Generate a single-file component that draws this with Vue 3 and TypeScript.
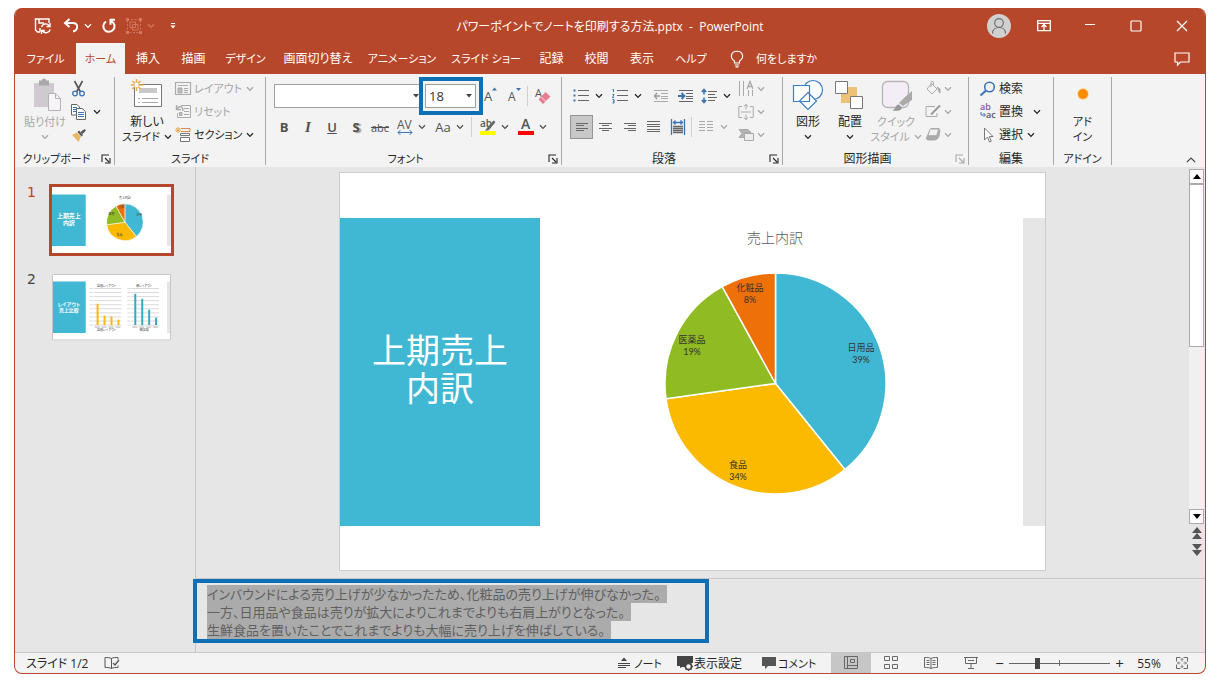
<script setup lang="ts">
import { computed, h, ref } from 'vue'

const Chevron = () =>
  h('svg', { class: 'chevron', viewBox: '0 0 8 6', 'aria-hidden': 'true' }, [
    h('path', { d: 'M1 1.2 4 4.4 7 1.2', fill: 'none', stroke: 'currentColor', 'stroke-width': 1.3 }),
  ])

const Launcher = () =>
  h('svg', { viewBox: '0 0 10 10', 'aria-hidden': 'true' }, [
    h('path', { d: 'M1 8V1h7M4 4l4 4M9 4v5H4', fill: 'none', stroke: 'currentColor', 'stroke-width': 1.1 }),
  ])

const tabs = [
  'ファイル', 'ホーム', '挿入', '描画', 'デザイン', '画面切り替え',
  'アニメーション', 'スライド ショー', '記録', '校閲', '表示', 'ヘルプ',
]
const isKana = (text: string) => /^[ァ-ヶー ]+$/.test(text)
const activeTab = ref('ホーム')

const fontName = ref('')
const fontSize = ref('18')
const zoom = ref(55)

interface Share {
  name: string
  label: string
  from: number
  to: number
  color: string
  x: number
  y: number
}

const shares: Share[] = [
  { name: '日用品', label: '39%', from: 0, to: 0.392, color: '#41b8d3', x: 321, y: 133 },
  { name: '食品', label: '34%', from: 0.392, to: 0.728, color: '#fbb900', x: 198, y: 250 },
  { name: '医薬品', label: '19%', from: 0.728, to: 0.92, color: '#90bb23', x: 152, y: 125 },
  { name: '化粧品', label: '8%', from: 0.92, to: 1, color: '#ee7008', x: 210, y: 73 },
]

function slicePath(s: Share, cx: number, cy: number, r: number): string {
  const point = (t: number) => {
    const a = t * 2 * Math.PI
    return `${(cx + r * Math.sin(a)).toFixed(2)} ${(cy - r * Math.cos(a)).toFixed(2)}`
  }
  const large = s.to - s.from > 0.5 ? 1 : 0
  return `M${cx} ${cy}L${point(s.from)}A${r} ${r} 0 ${large} 1 ${point(s.to)}Z`
}

const mainSlices = computed(() => shares.map((s) => ({ ...s, d: slicePath(s, 235.5, 165.5, 110.5) })))
const thumbSlices = computed(() => shares.map((s) => ({ ...s, d: slicePath(s, 73.5, 35.5, 18.5) })))

const barCharts = [
  { x: 42, color: '#fbb900', title: '店頭レイアウト', axis: '店頭レイアウト', tops: [30, 42, 43, 46] },
  { x: 80, color: '#35aabf', title: '新レイアウト', axis: '新店頭', tops: [20, 25, 36, 44] },
]

const notes = [
  'インバウンドによる売り上げが少なかったため、化粧品の売り上げが伸びなかった。',
  '一方、日用品や食品は売りが拡大によりこれまでよりも右肩上がりとなった。',
  '生鮮食品を置いたことでこれまでよりも大幅に売り上げを伸ばしている。',
]
</script>

<template>
  <div class="screen" lang="ja">
    <div class="window">
      <header class="titlebar">
        <div class="quick">
          <button aria-label="保存">
            <svg width="18" height="18" viewBox="0 0 18 18" fill="none" stroke="#fff" stroke-width="1.4">
              <path d="M6 15H3.500L1.500 13V2h13.500v4M5 2v4h5M6 15v-4" />
              <path d="M7.500 10a4.300 4.300 0 0 1 7.500-1.500M16 6v3.500h-3.500M16.200 12.500a4.300 4.300 0 0 1-7.600 1.500M7.500 17v-3.500h3.300" />
            </svg>
          </button>
          <button aria-label="元に戻す" class="undo">
            <svg width="16" height="16" viewBox="0 0 16 16" fill="none" stroke="#fff" stroke-width="2">
              <path d="M6.500 1 2 5l4.500 4M2.500 5H10c5.500 0 5.500 7 0 8.500" />
            </svg>
            <Chevron />
          </button>
          <button aria-label="繰り返し" class="redo">
            <svg width="16" height="16" viewBox="0 0 16 16" fill="none" stroke="#fff" stroke-width="2">
              <path d="M5 3.500a5.600 5.600 0 1 0 5.500-.2M14 1.800H9.500v5" />
            </svg>
          </button>
          <button aria-label="グループ化" class="dim">
            <svg width="16" height="16" viewBox="0 0 16 16" fill="none" stroke="currentColor">
              <path d="M1.500 1.500h13v13h-13z" stroke-dasharray="2 1.500" />
              <path d="M4 4h5.500v5.500H4zM6.500 6.500H12V12H6.500z" />
              <path d="M0 0h3v3H0zM13 0h3v3h-3zM0 13h3v3H0zM13 13h3v3h-3z" fill="currentColor" stroke="none" />
            </svg>
            <Chevron />
          </button>
          <button aria-label="クイック アクセス ツール バーのユーザー設定" class="customize">
            <svg width="8" height="8" viewBox="0 0 8 8" fill="#fff"><path d="M2 1h4v1H2zM1.500 3.500h5L4 6.500z" /></svg>
          </button>
        </div>
        <h1>パワーポイントでノートを印刷する方法.pptx&nbsp; -&nbsp; PowerPoint</h1>
        <div class="controls">
          <button aria-label="アカウント" class="avatar">
            <svg width="24" height="24" viewBox="0 0 24 24" fill="none" stroke="#6a6f75" stroke-width="1.2">
              <circle cx="12" cy="12" r="12" fill="#d2d0ce" stroke="none" />
              <circle cx="12" cy="9" r="4.300" /><path d="M5.500 19.500c0-8 13-8 13 0" />
            </svg>
          </button>
          <button aria-label="リボンの表示オプション">
            <svg width="14" height="14" viewBox="0 0 14 14" fill="none" stroke="#fff" stroke-width="1.300">
              <path d="M.7 1.700h12.600v10H.7zM.7 4.300h12.600M7 11V5.500M4.500 8 7 5.500 9.500 8" />
            </svg>
          </button>
          <button aria-label="最小化">
            <svg width="12" height="12" viewBox="0 0 12 12" stroke="#fff" stroke-width="1.200"><path d="M1 4.500h10" /></svg>
          </button>
          <button aria-label="最大化">
            <svg width="12" height="12" viewBox="0 0 12 12" fill="none" stroke="#fff" stroke-width="1.200"><rect x="1" y="1" width="10" height="10" rx="1" /></svg>
          </button>
          <button aria-label="閉じる">
            <svg width="12" height="12" viewBox="0 0 12 12" stroke="#fff" stroke-width="1.200"><path d="M1 1l10 10M11 1 1 11" /></svg>
          </button>
        </div>
      </header>

      <nav class="tabbar">
        <div class="tabs">
          <button
            v-for="tab in tabs"
            :key="tab"
            :class="{ active: tab === activeTab, kana: isKana(tab) }"
            @click="activeTab = tab"
          >{{ tab }}</button>
        </div>
        <button class="tell-me kana">
          <svg width="14" height="18" viewBox="0 0 14 18" fill="none" stroke="#fff" stroke-width="1.200">
            <path d="M4.500 13v-2C1.500 9 1 7 1.500 5c1.500-5 9.500-5 11 0 .5 2 0 4-3 6v2zM4.800 15h4.400M5.500 16.800h3" />
          </svg>
          何をしますか
        </button>
        <button class="comment-button" aria-label="コメント">
          <svg width="16" height="14" viewBox="0 0 16 14" fill="none" stroke="#fff" stroke-width="1.200">
            <path d="M1 1h14v9H6.500L3.500 13v-3H1z" />
          </svg>
        </button>
      </nav>

      <section class="ribbon">
        <div class="group">
          <div class="body clipboard">
            <button class="big off">
              <svg width="32" height="32" viewBox="0 0 32 32">
                <path d="M5 4h20v24H5z" fill="#cfcacf" /><path d="M10 1.500h2.500a2.600 2.600 0 0 1 5 0H20v5H10z" fill="#aba8ab" />
                <path d="M19.500 14.500h7l5 5v12h-12z" fill="#f7f5f7" stroke="#b5b2b5" /><path d="M26.500 14.500v5h5" fill="none" stroke="#b5b2b5" />
              </svg>
              <span class="kana">貼り付け</span>
              <Chevron class="below" />
            </button>
            <div class="stack">
              <button aria-label="切り取り">
                <svg width="16" height="16" viewBox="0 0 16 16" fill="none">
                  <path d="M3.500 0 9.500 11M11.500 0l-6 11" stroke="#555" stroke-width="1.600" />
                  <circle cx="4" cy="12.500" r="2.300" stroke="#3b73b4" stroke-width="1.300" /><circle cx="11" cy="12.500" r="2.300" stroke="#3b73b4" stroke-width="1.300" />
                </svg>
              </button>
              <button aria-label="コピー" class="wide">
                <svg width="16" height="16" viewBox="0 0 16 16" stroke="#666" fill="#fff">
                  <path d="M.5.5H6l2.500 2.500v8h-8z" /><path d="M2 3.500h4M2 5.500h3M2 7.500h3" stroke="#3b73b4" />
                  <path d="M5.500 4.500H11l3.500 3v8h-9z" /><path d="M7 8.500h6M7 10.500h6M7 12.500h6" stroke="#3b73b4" />
                </svg>
                <Chevron />
              </button>
              <button aria-label="書式のコピー/貼り付け">
                <svg width="16" height="16" viewBox="0 0 16 16">
                  <path d="M1 8 6 5.500l4 4L7.500 15z" fill="#e9b866" /><path d="M6.500 5 8 3.500 12 8l-1.500 1.500z" fill="#555" /><path d="M9.500 5l4-3 1.500 1.500-3.500 3.500z" fill="#555" />
                </svg>
              </button>
            </div>
          </div>
          <div class="label"><span class="kana">クリップボード</span><Launcher class="launcher" /></div>
        </div>

        <div class="group">
          <div class="body slides">
            <button class="big new-slide">
              <svg width="32" height="32" viewBox="0 0 32 32" fill="none">
                <path d="M3.500 5.500h27v22h-27z" fill="#fff" stroke="#777" />
                <path d="M8 9h18v5H8z" fill="#c8c8c8" /><path d="M7 19.500h2m2 0h16M7 23.500h2m2 0h16" stroke="#aaa" />
                <path d="M5.500 0v12M0 6h12M1.500 2l8 8M9.500 2l-8 8" stroke="#e9ab4e" stroke-width="1.500" /><circle cx="5.500" cy="6" r="2.200" fill="#fff" />
              </svg>
              <span>新しい</span>
              <span class="with-chevron kana">スライド <Chevron /></span>
            </button>
            <div class="stack">
              <button class="off">
                <svg width="16" height="16" viewBox="0 0 16 16" fill="none" stroke="#aaa"><path d="M.5 1.500h15v12H.5zM3 4.500h10" stroke-width="1.200" /><path d="M3 7h4v5H3z" fill="#bbb" /><path d="M9 7.500h4M9 9.500h4M9 11.500h4" /></svg>
                <span class="kana">レイアウト</span><Chevron />
              </button>
              <button class="off">
                <svg width="16" height="16" viewBox="0 0 16 16" fill="none" stroke="#aaa"><path d="M6 1.500h9.500v12h-13V9M9 4.500h5M9 7.500h5M9 10.500h5" /><path d="M1.500 1v4.500H6M2 5c2-4 6-3 6 2" stroke-width="1.400" /><path d="M4.500 8.500h2.500v3H4.500z" fill="#bbb" /></svg>
                <span class="kana">リセット</span>
              </button>
              <button>
                <svg width="16" height="16" viewBox="0 0 16 16" fill="none"><path d="M6 1.500h9v3H6" stroke="#d98b52" /><path d="M5.500 6.500h9v2h-9zM5.500 10.500h9v4h-9z" stroke="#777" fill="#fff" /><path d="M3 0v6M0 3h6M1 1l4 4M5 1 1 5" stroke="#e9ab4e" /></svg>
                <span class="kana">セクション</span><Chevron />
              </button>
            </div>
          </div>
          <div class="label"><span class="kana">スライド</span></div>
        </div>

        <div class="group">
          <div class="body rows">
            <div class="row fields">
              <label class="combo font-name">
                <select v-model="fontName" aria-label="フォント"><option value=""></option></select>
                <svg width="6" height="4" viewBox="0 0 6 4" fill="#444"><path d="M0 0h6L3 3.500z" /></svg>
              </label>
              <label class="combo font-size">
                <select v-model="fontSize" aria-label="フォント サイズ"><option>18</option></select>
                <svg width="6" height="4" viewBox="0 0 6 4" fill="#444"><path d="M0 0h6L3 3.500z" /></svg>
                <span class="callout"></span>
              </label>
              <button class="cell" aria-label="フォント サイズの拡大">
                <svg width="16" height="18" viewBox="0 0 16 18"><text x="2" y="14" font-size="13" fill="#555">A</text><path d="M10 3.500 12.500.5l2.500 3z" fill="#3b73b4" /></svg>
              </button>
              <button class="cell" aria-label="フォント サイズの縮小">
                <svg width="16" height="18" viewBox="0 0 16 18"><text x="2" y="14" font-size="12" fill="#555">A</text><path d="M10 1h5l-2.500 3z" fill="#3b73b4" /></svg>
              </button>
              <i class="rule"></i>
              <button class="cell" aria-label="すべての書式をクリア">
                <svg width="18" height="18" viewBox="0 0 18 18"><text x="2" y="10" font-size="11" fill="#555">A</text><path d="M5.500 12.500 12.500 5l5 4.500-7.500 7.500z" fill="#e57f91" /><path d="M8 10l5 4.500" stroke="#f3f3f3" stroke-width=".8" /></svg>
              </button>
            </div>
            <div class="row styles">
              <button class="cell"><b>B</b></button>
              <button class="cell"><i class="italic">I</i></button>
              <button class="cell"><u>U</u></button>
              <button class="cell"><b class="shadow">S</b></button>
              <button class="cell strike"><s>abc</s></button>
              <button class="split" aria-label="文字の間隔">
                <svg width="18" height="18" viewBox="0 0 18 18" fill="none"><text x="1" y="11" font-size="12" fill="#555">AV</text><path d="M2 14.500h14M4.500 12 2 14.500 4.500 17M13.500 12l2.500 2.500-2.500 2.500" stroke="#3b73b4" /></svg>
                <Chevron />
              </button>
              <button class="split"><span class="case">Aa</span><Chevron /></button>
              <i class="rule"></i>
              <button class="split" aria-label="蛍光ペンの色">
                <svg width="18" height="18" viewBox="0 0 18 18"><text x="1" y="9" font-size="10" font-weight="600" fill="#555">ab</text><path d="M14.500 2.500 8 10l-2 3 4-1 6.500-8z" fill="#666" /><path d="M1 13h16v4H1z" fill="#ffff00" /></svg>
                <Chevron />
              </button>
              <button class="split" aria-label="フォントの色">
                <svg width="18" height="18" viewBox="0 0 18 18"><text x="4" y="11" font-size="14" font-weight="600" fill="#555">A</text><path d="M1 13h16v4H1z" fill="#f00" /></svg>
                <Chevron />
              </button>
            </div>
          </div>
          <div class="label"><span class="kana">フォント</span><Launcher class="launcher" /></div>
        </div>

        <div class="group">
          <div class="body paragraph">
            <div class="rows">
              <div class="row">
                <button class="split list" aria-label="箇条書き">
                  <svg width="16" height="16" viewBox="0 0 16 16"><path d="M5 2.500h11M5 7.500h11M5 12.500h11" stroke="#666" /><path d="M.5 1.500h2v2h-2zM.5 6.500h2v2h-2zM.5 11.500h2v2h-2z" fill="#3b73b4" /></svg>
                  <Chevron />
                </button>
                <button class="split list" aria-label="段落番号">
                  <svg width="16" height="16" viewBox="0 0 16 16" fill="none"><path d="M5 2.500h11M5 7.500h11M5 12.500h11" stroke="#666" /><path d="M.5 1.500h1V4M.5 6.500h1.500L.5 9.500H2M.5 11.500h1.500v3.500H.5M1 13.500h1" stroke="#3b73b4" /></svg>
                  <Chevron />
                </button>
                <button class="indent" aria-label="インデントを減らす">
                  <svg width="16" height="16" viewBox="0 0 16 16" fill="none"><path d="M1 2.500h14M8 5.500h7M8 8.500h7M8 10.500h7M1 13.500h14" stroke="#aaa" /><path d="M7 8H1.500M4 5 1.500 8 4 11" stroke="#999" stroke-width="1.300" /></svg>
                </button>
                <button class="indent" aria-label="インデントを増やす">
                  <svg width="16" height="16" viewBox="0 0 16 16" fill="none"><path d="M1 2.500h14M8 5.500h7M8 8.500h7M8 10.500h7M1 13.500h14" stroke="#666" /><path d="M0 8h6M3.500 5 6.500 8l-3 3" stroke="#3b73b4" stroke-width="1.800" /></svg>
                </button>
                <button class="split list" aria-label="行間">
                  <svg width="16" height="16" viewBox="0 0 16 16" fill="none"><path d="M7 3.500h9M7 6.500h7M7 9.500h9M7 12.500h7" stroke="#666" /><path d="M3 2v4.500M3 9.500V14M.8 4 3 1.500 5.200 4M.8 12 3 14.500 5.200 12" stroke="#3b73b4" stroke-width="1.600" /></svg>
                  <Chevron />
                </button>
              </div>
              <div class="row aligns">
                <button class="align pressed" aria-label="左揃え"><svg width="16" height="16" viewBox="0 0 16 16" stroke="#666"><path d="M2 4.500h12M2 6.500h8M2 9.500h12M2 11.500h8" /></svg></button>
                <button class="align" aria-label="中央揃え"><svg width="16" height="16" viewBox="0 0 16 16" stroke="#666"><path d="M1 4.500h13M4 6.500h7M1 9.500h13M4 11.500h7" /></svg></button>
                <button class="align" aria-label="右揃え"><svg width="16" height="16" viewBox="0 0 16 16" stroke="#666"><path d="M2 4.500h12M6 6.500h8M2 9.500h12M6 11.500h8" /></svg></button>
                <button class="align" aria-label="両端揃え"><svg width="16" height="16" viewBox="0 0 16 16" stroke="#666"><path d="M1 2.500h13M1 5.500h13M1 7.500h13M1 10.500h13M1 12.500h13" /></svg></button>
                <button class="align" aria-label="均等割り付け"><svg width="16" height="16" viewBox="0 0 16 16" fill="none"><path d="M1.500 0v16M14.500 0v16M4 3.500h8M5.500 1.500l-2 2 2 2M10.500 1.500l2 2-2 2" stroke="#3b73b4" stroke-width="1.300" /><path d="M3 7.500h10M3 9.500h10M3 11.500h10M3 13.500h10" stroke="#666" stroke-width="1.300" /></svg></button>
                <i class="rule"></i>
                <button class="split list off" aria-label="段組み"><svg width="16" height="16" viewBox="0 0 16 16" stroke="#aaa"><path d="M1 2.500h6M1 5.500h6M1 8.500h6M1 11.500h6M9 2.500h6M9 5.500h6M9 8.500h6M9 11.500h6" /></svg><Chevron /></button>
              </div>
            </div>
            <div class="stack off">
              <button aria-label="文字列の方向"><svg width="16" height="16" viewBox="0 0 16 16" fill="none" stroke="#aaa"><path d="M1.500 0v15M5.500 0v15M10.500 9v6M14.500 9v6" /><path d="M9 8 12 .5 15 8M10 5.500h4" stroke-width="1.300" /></svg><Chevron /></button>
              <button aria-label="文字の配置"><svg width="16" height="16" viewBox="0 0 16 16" fill="none" stroke="#aaa"><path d="M4 2.500H.8v11H4M12 2.500h3.200v11H12M3 8h10M8 0v5.500M5.800 2.500 8 .5l2.200 2M8 10.500V16M5.800 13.500l2.200 2 2.200-2" /></svg><Chevron /></button>
              <button aria-label="SmartArt に変換"><svg width="16" height="16" viewBox="0 0 16 16" fill="none" stroke="#aaa"><path d="M1 2.500h9l3 3H6v5H1l3-4z" fill="#b5b5b5" /><path d="M6.500 6.500h9v7h-9z" fill="#eee" /></svg><Chevron /></button>
            </div>
          </div>
          <div class="label"><span>段落</span><Launcher class="launcher" /></div>
        </div>

        <div class="group">
          <div class="body drawing">
            <button class="big">
              <svg width="32" height="32" viewBox="0 0 32 32" fill="#fff" stroke="#3b7cc4" stroke-width="1.200"><circle cx="21" cy="11" r="9.500" /><path d="M1.500 6.500h16v16h-16zM16 13.500l8.500 8.500-8.500 8.500L7.500 22z" /></svg>
              <span>図形</span><Chevron class="below" />
            </button>
            <button class="big">
              <svg width="32" height="32" viewBox="0 0 32 32"><path d="M14 8h9v9h-9zM7 15h9v9H7z" fill="#ecc278" /><g fill="#fff" stroke="#777"><path d="M1.500 2.500h12v12h-12zM16.500 17.500h12v12h-12z" /></g></svg>
              <span>配置</span><Chevron class="below" />
            </button>
            <button class="big off quick-style">
              <svg width="32" height="32" viewBox="0 0 32 32"><rect x="2.500" y="2.500" width="26" height="26" rx="5" fill="#f3edf5" stroke="#b8b5b8" stroke-width="1.300" /><path d="M32 12v9L23 27l-4-3 6-6z" fill="#aaa" /><path d="M12 31.500c4-1 3-6 7-6l3 3c-1 4-6 3.500-10 3z" fill="#999" /></svg>
              <span class="kana">クイック</span><span class="with-chevron kana">スタイル <Chevron /></span>
            </button>
            <div class="stack off">
              <button aria-label="図形の塗りつぶし"><svg width="16" height="16" viewBox="0 0 16 16" fill="none" stroke="#aaa"><path d="M6.500 2.500 12 8l-5 5-5-5zM6 6V1.500c0-1.500 2.500-1.500 2.500 0V5" /><path d="M12 6l3 2v4c-2-1-1-4-3-6z" fill="#aaa" /></svg><Chevron /></button>
              <button aria-label="図形の枠線"><svg width="16" height="16" viewBox="0 0 16 16" fill="none" stroke="#aaa"><path d="M10 2.500H1v10h11V9" /><path d="M15 1.500 8 8.500l-2 2" stroke="#999" stroke-width="1.800" /></svg><Chevron /></button>
              <button aria-label="図形の効果"><svg width="16" height="16" viewBox="0 0 16 16" stroke="#aaa"><path d="M6 1.500h7c1.500 0 2 1 1.800 2.500L14 9c-.3 2-2.500 4-4.500 4H3.500C2 13 1 12 1.500 10.500z" fill="#aaa" /><path d="M5.800 2h6.500c1 0 1.300.5 1 1.500l-1 3.500c-.4 1.200-1 1.700-2.200 1.700H4.500c-1 0-1.300-.7-1-1.700l1-3.500C4.800 2.500 5 2 5.800 2z" fill="#f0f0f0" /></svg><Chevron /></button>
            </div>
          </div>
          <div class="label"><span>図形描画</span><Launcher class="launcher off" /></div>
        </div>

        <div class="group">
          <div class="body editing">
            <div class="stack">
              <button><svg width="16" height="16" viewBox="0 0 16 16" fill="none" stroke="#3b73b4"><circle cx="9.500" cy="6" r="4.800" stroke-width="1.600" /><path d="M6 9.500.5 14.500" stroke-width="2" /></svg><span>検索</span></button>
              <button class="replace"><svg width="16" height="16" viewBox="0 0 16 16"><text x="0" y="6" font-size="9" font-weight="600" fill="#8a55a8">ab</text><text x="6" y="14" font-size="9" font-weight="600" fill="#555">ac</text><path d="M1 8v3h4M3.500 9l2 2-2 2" fill="none" stroke="#3b73b4" /></svg><span>置換</span><Chevron /></button>
              <button><svg width="16" height="16" viewBox="0 0 16 16" fill="#fff" stroke="#777"><path d="M4.500 1v12l3-3 2 5 1.800-.8-2-4.700h3.700z" /></svg><span>選択</span><Chevron /></button>
            </div>
          </div>
          <div class="label"><span>編集</span></div>
        </div>

        <div class="group">
          <div class="body addin">
            <button class="big">
              <svg width="32" height="32" viewBox="0 0 32 32"><circle cx="16" cy="15" r="6" fill="#ffd9a0" /><circle cx="16" cy="15" r="5" fill="#ff8c00" /></svg>
              <span class="kana">アド</span><span class="kana">イン</span>
            </button>
          </div>
          <div class="label"><span class="kana">アドイン</span></div>
        </div>

        <button class="collapse" aria-label="リボンを折りたたむ">
          <svg width="10" height="6" viewBox="0 0 10 6" fill="none" stroke="#444" stroke-width="1.200"><path d="M.8 5.200 5 1l4.200 4.200" /></svg>
        </button>
      </section>

      <main class="workspace">
        <aside class="thumbs">
          <div class="thumb current">
            <span>1</span>
            <svg viewBox="0 0 120 67">
              <path d="M0 0h120v67H0z" fill="#fff" /><path d="M0 7.500h34v52H0z" fill="#41b8d3" /><path d="M116 7.500h4v52h-4z" fill="#e6e6e6" />
              <text x="17" y="31" class="mini-title">上期売上</text><text x="17" y="38" class="mini-title">内訳</text>
              <text x="73.500" y="12" class="mini-label">売上内訳</text>
              <path v-for="s in thumbSlices" :key="s.name" :d="s.d" :fill="s.color" stroke="#fff" stroke-width=".6" />
              <text x="88" y="29" class="mini-label">日用</text><text x="68" y="49" class="mini-label">食品</text><text x="60" y="28" class="mini-label">医薬</text><text x="70" y="21" class="mini-label">化粧</text>
            </svg>
          </div>
          <div class="thumb">
            <span>2</span>
            <svg viewBox="0 0 120 67">
              <path d="M0 0h120v67H0z" fill="#fff" /><path d="M0 7.500h34v52H0z" fill="#41b8d3" /><path d="M116 7.500h4v52h-4z" fill="#e6e6e6" />
              <text x="17" y="32" class="mini-title small">レイアウト</text><text x="17" y="38" class="mini-title small">売上比較</text>
              <g v-for="chart in barCharts" :key="chart.title">
                <text :x="chart.x + 13" y="13" class="mini-label">{{ chart.title }}</text>
                <path v-for="n in 10" :key="n" :d="`M${chart.x} ${10.5 + n * 4.1}h28M${chart.x - 4} ${10.5 + n * 4.1}h3`" stroke="#c8c8c8" stroke-width=".7" />
                <rect v-for="(top, i) in chart.tops" :key="i" :x="chart.x + 3 + i * 7" :y="top" width="2" :height="51.5 - top" :fill="chart.color" />
                <path :d="`M${chart.x + 1} 53.500h26`" stroke="#999" stroke-width=".8" stroke-dasharray="5 2" />
                <text :x="chart.x + 13" y="57" class="mini-label">{{ chart.axis }}</text>
              </g>
              <path d="M.5.5h119v66H.500z" fill="none" stroke="#c6c6c6" />
            </svg>
          </div>
        </aside>

        <div class="editor">
          <div class="stage-row">
            <div class="stage">
              <article class="slide">
                <h2><span>上期売上<br />内訳</span></h2>
                <svg class="chart" viewBox="0 0 483 308">
                  <text x="235" y="25" class="chart-title">売上内訳</text>
                  <path v-for="s in mainSlices" :key="s.name" :d="s.d" :fill="s.color" stroke="#fff" stroke-width="1.500" stroke-linejoin="round" />
                  <g v-for="s in shares" :key="s.label" class="chart-label">
                    <text :x="s.x" :y="s.y">{{ s.name }}</text>
                    <text :x="s.x" :y="s.y + 12">{{ s.label }}</text>
                  </g>
                </svg>
                <div class="edge"></div>
              </article>
            </div>
            <div class="scrollbar">
              <button aria-label="上へ"><svg width="8" height="5" viewBox="0 0 8 5"><path d="M0 5h8L4 0z" /></svg></button>
              <div class="track"><div class="handle"></div></div>
              <button aria-label="下へ"><svg width="8" height="5" viewBox="0 0 8 5"><path d="M0 0h8L4 5z" /></svg></button>
              <button class="jump" aria-label="前のスライド"><svg width="12" height="12" viewBox="0 0 12 12"><path d="M1 6 6 0l5 6zM1 12l5-6 5 6z" fill="#555" /></svg></button>
              <button class="jump" aria-label="次のスライド"><svg width="12" height="12" viewBox="0 0 12 12"><path d="M1 0h10L6 6zM1 6h10l-5 6z" fill="#555" /></svg></button>
            </div>
          </div>
          <div class="notes">
            <div class="note-text" contenteditable="true" spellcheck="false" role="textbox" aria-label="ノート">
              <p v-for="line in notes" :key="line"><mark>{{ line }}</mark></p>
            </div>
            <span class="callout"></span>
          </div>
        </div>
      </main>

      <footer class="status">
        <span class="page">スライド 1/2</span>
        <button aria-label="スペル チェック">
          <svg width="16" height="14" viewBox="0 0 16 14" fill="none" stroke="#555"><path d="M7.500 2.500v10C6 11.500 3 11.500 1 11.500v-10c2 0 5 0 6.500 1 1.500-1 4-1 6.500-1v2M7.500 12.500c1.500-1 4-1 6.500-1v-2" /><path d="M9 7l2 2 4-5" stroke-width="1.300" /></svg>
        </button>
        <div class="panes">
          <button class="notes-button"><svg width="14" height="14" viewBox="0 0 14 14" fill="none" stroke="#444"><path d="M1 7.500h12M1 9.500h12M1 11.500h8" /><path d="M4 5h6L7 1.500z" fill="#444" stroke="none" /></svg><span class="kana">ノート</span></button>
          <button class="display-button"><svg width="16" height="16" viewBox="0 0 16 16"><path d="M0 1h16v7h-4l-4 4H5l-2 1V11H0z" fill="#444" /><circle cx="11.500" cy="11.500" r="3" fill="#f3f3f3" stroke="#444" stroke-width="1.500" /><path d="M11.500 7v2M11.500 14v2M7 11.500h2M14 11.500h2M8.500 8.500l1 1M13.500 13.500l1 1M8.500 14.500l1-1M13.500 9.500l1-1" stroke="#444" stroke-width="1.300" /></svg>表示設定</button>
          <button class="comments-button"><svg width="16" height="14" viewBox="0 0 16 14"><path d="M1 1h14v9H7l-3 3v-3H1z" fill="#555" /></svg><span class="kana">コメント</span></button>
        </div>
        <div class="views">
          <button class="pressed" aria-label="標準"><svg width="14" height="14" viewBox="0 0 14 14" fill="none" stroke="#666"><path d="M.5.5h13v12H.5zM3.500.5v12M3.500 9.500h10M6.500 3.500h4v3h-4z" /></svg></button>
          <button aria-label="スライド一覧"><svg width="14" height="14" viewBox="0 0 14 14" fill="none" stroke="#666"><path d="M.5.5h5v4h-5zM8.500.5h5v4h-5zM.5 8.500h5v4h-5zM8.500 8.500h5v4h-5z" /></svg></button>
          <button aria-label="閲覧表示"><svg width="14" height="14" viewBox="0 0 14 14" fill="none" stroke="#666"><path d="M7 2.500v10C5.500 11.500 3 11.500.5 11.500v-10c2.500 0 5 0 6.500 1 1.500-1 4-1 6.500-1v10c-2.500 0-5 0-6.500 1M2.500 4.500h3M2.500 6.500h3M2.500 8.500h3M8.500 4.500h3M8.500 6.500h3M8.500 8.500h3" /></svg></button>
          <button aria-label="スライド ショー"><svg width="14" height="14" viewBox="0 0 14 14" fill="none" stroke="#666"><path d="M0 1.500h14M1.500 1.500v6h11v-6M7 7.500v5M4 12.500h6M4 4.500h6" /></svg></button>
        </div>
        <div class="zoom">
          <button aria-label="縮小">−</button>
          <input v-model="zoom" type="range" min="0" max="200" aria-label="ズーム" />
          <button aria-label="拡大">+</button>
          <button class="percent">{{ zoom }}%</button>
          <button aria-label="ウィンドウに合わせる"><svg width="12" height="12" viewBox="0 0 12 12" fill="none" stroke="#666"><path d="M.5.5h11v11H.5z" stroke-dasharray="4 3 8 3 8 3 8 3 4" /><path d="M6 1.500v3M4.500 3 6 1.500 7.500 3M6 10.500v-3M4.500 9 6 10.500 7.500 9M1.500 6h3M3 4.500 1.500 6 3 7.500M10.500 6h-3M9 4.500 10.500 6 9 7.500" stroke-width=".8" /></svg></button>
        </div>
      </footer>
    </div>
  </div>
</template>

<style>
body {
  margin: 0;
  background: #fff;
}
</style>

<style scoped>
.screen {
  box-sizing: border-box;
  min-height: 100vh;
  display: flex;
  padding: 8px 14px;
  font-family: "Open Sans", "Noto Sans CJK JP", sans-serif;
  font-size: 12px;
  line-height: 15px;
  font-feature-settings: "palt";
  color: #262626;
  white-space: nowrap;
}
.window {
  flex: 1;
  display: flex;
  flex-direction: column;
  min-width: 0;
  border: 1px solid #b7472a;
  border-top: 0;
  border-radius: 8px;
  overflow: hidden;
  background: #f3f3f3;
}
button {
  display: flex;
  align-items: center;
  justify-content: center;
  padding: 0;
  border: 0;
  background: none;
  font: inherit;
  font-feature-settings: inherit;
  color: inherit;
  white-space: nowrap;
}
svg {
  flex: none;
  display: block;
  overflow: visible;
}
svg.chevron {
  width: 8px;
  height: 6px;
}
.off {
  color: #a6a6a6;
}
.kana {
  font-size: 11px;
}

.titlebar {
  height: 35px;
  display: grid;
  grid-template-columns: 1fr auto 1fr;
  align-items: center;
  background: #b7472a;
  color: #fff;
}
.titlebar h1 {
  margin: 0;
  padding-top: 2px;
  font-size: 12px;
  font-weight: 400;
}
.quick {
  display: flex;
  align-items: center;
  padding-left: 19px;
}
.quick button {
  gap: 5px;
}
.quick .undo,
.quick .dim {
  margin-left: 11px;
}
.quick .redo,
.quick .dim {
  margin-left: 9px;
}
.quick .customize {
  margin-left: 14px;
}
.quick .dim {
  color: #d4765d;
}
.controls {
  display: flex;
  align-items: center;
  justify-content: flex-end;
}
.controls button {
  width: 46px;
  height: 32px;
}
.controls .avatar {
  width: 24px;
  margin-right: 10px;
}

.tabbar {
  display: flex;
  height: 31px;
  background: #b7472a;
  color: #fff;
}
.tabs {
  display: grid;
  grid-template-columns: 61px 49px 46px 45px 59px 86px 82px 86px 45px 45px 46px 52px;
}
.tabs .active {
  background: #f3f3f3;
  color: #b7472a;
}
.tell-me {
  gap: 12px;
  margin-left: 13px;
}
.comment-button {
  margin-left: auto;
  margin-right: 15px;
}

.ribbon {
  display: grid;
  grid-template-columns: 100px 151px 296px 221px 186px 85px 58px 1fr;
  padding: 3px 0 2px;
}
.group {
  display: flex;
  flex-direction: column;
  border-right: 1px solid #a8a8a8;
}
.body {
  display: flex;
  height: 73px;
}
.label {
  display: flex;
  align-items: center;
  height: 15px;
  box-sizing: border-box;
  padding-top: 2px;
}
.label span {
  flex: 1;
  text-align: center;
}
.launcher {
  width: 10px;
  height: 10px;
  margin: 0 3px;
}
.big {
  flex-direction: column;
  justify-content: flex-start;
  width: 42px;
  padding-top: 2px;
}
.big > span:first-of-type {
  margin-top: 3px;
}
.below {
  margin-top: 5px;
}
.with-chevron {
  display: flex;
  align-items: center;
  gap: 4px;
}
.stack button {
  height: 23px;
  gap: 3px;
  justify-content: flex-start;
}
.stack span + .chevron {
  margin-left: 1px;
}
.clipboard {
  padding-left: 9px;
}
.clipboard .stack {
  margin-left: 5px;
}
.clipboard .wide {
  gap: 6px;
}
.slides .new-slide {
  width: 56px;
}
.slides {
  padding-left: 4px;
}

.rows {
  display: flex;
  flex-direction: column;
  gap: 7px;
  padding-top: 7px;
  box-sizing: border-box;
}
.row {
  display: flex;
  align-items: center;
  height: 24px;
}
.fields {
  padding-left: 8px;
}
.combo {
  position: relative;
  display: grid;
  align-items: center;
}
.combo select,
.combo > svg {
  grid-area: 1 / 1;
}
.combo > svg {
  justify-self: end;
  margin-right: 4px;
  pointer-events: none;
}
.combo select {
  width: 100%;
  height: 24px;
  padding: 0 3px;
  appearance: none;
  border: 1px solid #a0a0a0;
  border-radius: 0;
  background: #fff;
  font: inherit;
  font-size: 13px;
  color: #333;
}
.font-name {
  width: 149px;
}
.font-size {
  width: 51px;
  margin-left: 2px;
  margin-right: 2px;
}
.callout {
  position: absolute;
  border: 4px solid #0f6fb4;
  pointer-events: none;
}
.font-size .callout {
  inset: -7px -7px -7px -6px;
}
.cell {
  width: 24px;
  height: 24px;
}
.rule {
  width: 1px;
  height: 20px;
  background: #cfcfcf;
}
.fields .rule {
  margin: 0 2px 0 1px;
}
.styles {
  padding-left: 6px;
  font-size: 13px;
  color: #505050;
}
.italic {
  font-family: "Liberation Serif", serif;
  font-size: 15px;
  font-weight: 700;
}
u {
  font-weight: 600;
}
.shadow {
  text-shadow: 2px 1px 1px #999;
}
.strike {
  font-size: 11px;
}
.split {
  height: 24px;
  gap: 4px;
  padding: 0 4px;
}
.case {
  width: 18px;
}
.styles .rule {
  margin: 0 3px;
}
.styles .rule ~ .split {
  padding: 0 4px;
}
.paragraph {
  display: grid;
  grid-template-columns: 168px 1fr;
  padding-left: 8px;
}
.split.list {
  gap: 6px;
  padding: 0 3px;
  margin-right: 3px;
}
.indent {
  width: 25px;
  height: 24px;
}
.aligns {
  gap: 1px;
}
.align {
  width: 23px;
  height: 24px;
}
.align.pressed {
  background: #c8c8c8;
  box-shadow: inset 0 0 0 1px #949494;
}
.aligns .rule {
  margin: 0 2px 0 1px;
}
.drawing {
  padding-left: 4px;
}
.drawing .quick-style {
  width: 50px;
}
.drawing .stack {
  margin-left: 4px;
}
.editing {
  padding-left: 11px;
}
.replace > span {
  margin-right: 6px;
}
.addin {
  justify-content: center;
}
.collapse {
  align-self: end;
  justify-self: end;
  margin: 0 9px 2px 0;
}

.workspace {
  flex: 1;
  display: grid;
  grid-template-columns: 181px 1fr;
  background: #e6e6e6;
}
.thumbs {
  display: flex;
  flex-direction: column;
  gap: 15px;
  padding-top: 17px;
  border-right: 1px solid #c6c6c6;
}
.thumb {
  display: grid;
  grid-template-columns: 34px 125px;
  font-family: "DejaVu Sans", "Noto Sans CJK JP", sans-serif;
  font-size: 14px;
  color: #444;
}
.thumb span {
  padding-left: 12px;
  line-height: 16px;
}
.thumb svg {
  border: 3px solid transparent;
  overflow: hidden;
}
.thumb.current {
  color: #c43e1c;
}
.thumb.current svg {
  border-color: #b7472a;
}
.mini-title {
  font-size: 6px;
  font-weight: 700;
  fill: #fff;
  text-anchor: middle;
}
.mini-title.small {
  font-size: 5px;
}
.mini-label {
  font-size: 3px;
  fill: #444;
  text-anchor: middle;
}

.editor {
  display: flex;
  flex-direction: column;
  min-width: 0;
}
.stage-row {
  display: flex;
  border-bottom: 1px solid #c6c6c6;
}
.stage {
  flex: 1;
  padding: 6px 0 8px;
}
.slide {
  box-sizing: border-box;
  width: 71%;
  margin: 0 auto;
  padding: 45px 0 44px;
  display: grid;
  grid-template-columns: 200fr 483fr 22fr;
  background: #fff;
  box-shadow: 0 0 0 1px #cdcdcd;
}
.slide h2 {
  display: flex;
  align-items: center;
  justify-content: center;
  margin: 0;
  padding-bottom: 6px;
  background: #41b8d3;
  color: #fff;
  font-size: 34px;
  line-height: 38px;
  font-weight: 400;
  text-align: center;
  font-feature-settings: normal;
}
.chart {
  width: 100%;
}
.chart-title {
  font-size: 14px;
  fill: #595959;
  text-anchor: middle;
  font-weight: 300;
  font-feature-settings: normal;
}
.chart-label {
  font-family: Lato, "Noto Sans CJK JP", sans-serif;
  font-size: 9px;
  fill: #333;
  text-anchor: middle;
}
.edge {
  background: #e6e6e6;
}
.scrollbar {
  display: flex;
  flex-direction: column;
  width: 15px;
  padding: 2px 1px 20px 0;
}
.scrollbar button {
  height: 15px;
  border: 1px solid #ababab;
  background: #fff;
}
.scrollbar .track {
  flex: 1;
  background: #f0f0f0;
}
.scrollbar .handle {
  box-sizing: border-box;
  height: 50%;
  border: 1px solid #ababab;
  background: #fff;
}
.scrollbar .jump {
  height: 17px;
  border: 0;
  background: none;
}

.notes {
  position: relative;
  flex: 1;
  padding: 6px 0 0 11px;
}
.note-text {
  font-size: 13px;
  line-height: 18px;
}
.note-text p {
  margin: 0;
}
.note-text mark {
  display: inline-block;
  padding-right: 6px;
  background: #ababab;
  color: #606060;
}
.notes .callout {
  box-sizing: border-box;
  top: 0;
  left: -3px;
  width: 516px;
  height: 64px;
}

.status {
  display: flex;
  align-items: center;
  height: 20px;
  border-top: 1px solid #c6c6c6;
  padding: 0 17px 0 11px;
}
.page {
  margin-right: 15px;
}
.panes {
  display: flex;
  margin-left: auto;
}
.panes button {
  justify-content: flex-start;
  gap: 1px;
}
.panes .notes-button {
  width: 60px;
  gap: 3px;
}
.display-button {
  width: 84px;
}
.comments-button {
  width: 70px;
}
.views {
  display: flex;
  align-self: stretch;
}
.views button {
  width: 40px;
}
.views .pressed {
  background: #c6c6c6;
}
.zoom {
  display: flex;
  align-items: center;
  gap: 4px;
  margin-left: 3px;
}
.zoom button {
  min-width: 11px;
  font-size: 15px;
}
.zoom .percent {
  width: 40px;
  margin-right: 3px;
  font-size: 12px;
}
.zoom input {
  appearance: none;
  width: 101px;
  height: 12px;
  margin: 0;
  background:
    linear-gradient(#666, #666) center / 1px 6px no-repeat,
    linear-gradient(#666, #666) center / 100% 1px no-repeat;
}
.zoom input::-webkit-slider-thumb {
  appearance: none;
  width: 5px;
  height: 11px;
  background: #444;
}
</style>
